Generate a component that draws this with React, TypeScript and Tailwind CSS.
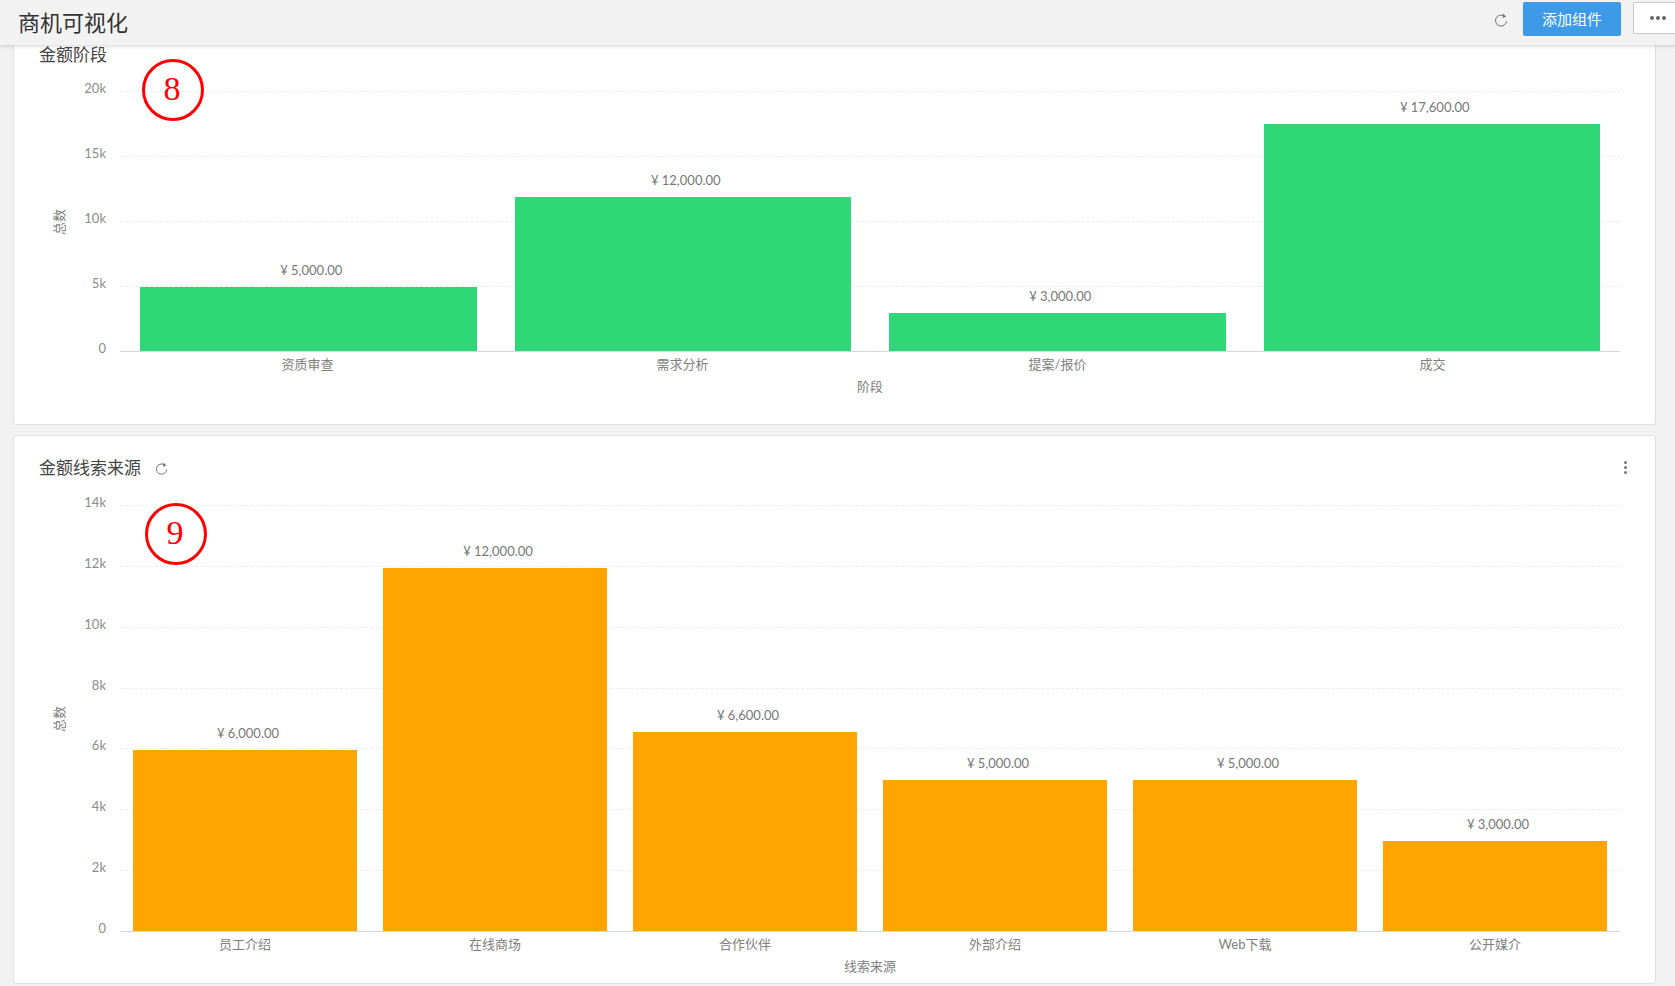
interface Datum {
  name: string;
  amount: string;
  height: number;
}

interface ChartProps {
  ticks: string[];
  plotHeight: number;
  barColor: string;
  rowClass: string;
  slotPadding: string;
  xTitle: string;
  data: Datum[];
}

const stageData: Datum[] = [
  { name: "资质审查", amount: "¥ 5,000.00", height: 64 },
  { name: "需求分析", amount: "¥ 12,000.00", height: 154 },
  { name: "提案/报价", amount: "¥ 3,000.00", height: 38 },
  { name: "成交", amount: "¥ 17,600.00", height: 227 },
];

const sourceData: Datum[] = [
  { name: "员工介绍", amount: "¥ 6,000.00", height: 181 },
  { name: "在线商场", amount: "¥ 12,000.00", height: 363 },
  { name: "合作伙伴", amount: "¥ 6,600.00", height: 199 },
  { name: "外部介绍", amount: "¥ 5,000.00", height: 151 },
  { name: "Web下载", amount: "¥ 5,000.00", height: 151 },
  { name: "公开媒介", amount: "¥ 3,000.00", height: 90 },
];

function RefreshIcon({ className }: { className: string }) {
  return (
    <svg viewBox="0 0 14 14" className={className} fill="none">
      <path d="M12.5 8A5.5 5.5 0 1 1 10 3" stroke="#707070" strokeWidth="1" />
      <path d="M9 .8 12.2 3.6 8.6 5Z" fill="#707070" />
    </svg>
  );
}

function Chart({ ticks, plotHeight, barColor, rowClass, slotPadding, xTitle, data }: ChartProps) {
  return (
    <div className="flex flex-col text-[13px] leading-4 text-[#808080]">
      <div className="flex">
        {/* y axis */}
        <div className="flex w-[106px] pl-[38px] pr-[14px]">
          <div className="flex w-[14px] items-center justify-center">
            <span className="whitespace-nowrap -rotate-90">总数</span>
          </div>
          <div className="-mt-[10px] -mb-[3px] flex flex-1 flex-col justify-between text-right leading-[14px] text-[#8c8c8c]">
            {ticks.map((t) => (
              <span key={t}>{t}</span>
            ))}
          </div>
        </div>

        {/* plot */}
        <div className="grid w-[1500px]" style={{ height: plotHeight }}>
          <div className="col-start-1 row-start-1 flex flex-col justify-between">
            {ticks.map((t, i) =>
              i === ticks.length - 1 ? (
                <div key={t} className="border-t border-[#d4d7dc]" />
              ) : (
                <div key={t} className="border-t border-dashed border-[#ececec]" />
              ),
            )}
          </div>
          <div className={`col-start-1 row-start-1 flex pb-px ${rowClass}`}>
            {data.map((d) => (
              <div key={d.name} className={`flex flex-1 flex-col items-stretch justify-end ${slotPadding}`}>
                <span className="mb-[10px] ml-[6px] text-center leading-[14px] text-[#777]">{d.amount}</span>
                <div style={{ height: d.height, backgroundColor: barColor }} />
              </div>
            ))}
          </div>
        </div>
      </div>

      {/* x axis */}
      <div className="mt-[4px] ml-[106px] flex w-[1500px]">
        {data.map((d) => (
          <span key={d.name} className="flex-1 text-center">
            {d.name}
          </span>
        ))}
      </div>
      <div className="mt-[6px] ml-[106px] w-[1500px] text-center">{xTitle}</div>
    </div>
  );
}

function Mark({ label, className }: { label: string; className: string }) {
  return (
    <div
      className={`absolute flex h-[62px] w-[62px] items-center justify-center rounded-full border-[3px] border-[#f00] pr-[2px] pb-[2px] text-[34px] leading-none text-[#f00] [font-family:'Liberation_Serif',serif] ${className}`}
    >
      {label}
    </div>
  );
}

export default function App() {
  return (
    <div className="flex h-screen w-full flex-col overflow-hidden bg-[#f2f2f2] [font-family:Lato,'Noto_Sans_CJK_SC',sans-serif]">
      {/* Top bar */}
      <header className="relative z-10 flex h-[45px] shrink-0 justify-between bg-[#f2f2f2] pl-[18px] shadow-[0_1px_4px_rgba(0,0,0,0.18)]">
        <h1 className="self-center text-[22px] leading-7 font-normal text-[#333]">商机可视化</h1>
        <div className="mt-[2px] flex items-start">
          <RefreshIcon className="mt-[11px] mr-[15px] h-[14px] w-[14px]" />
          <button className="h-[34px] w-[98px] rounded-[2px] bg-[#3c9ae8] text-[15px] text-white">添加组件</button>
          <button className="ml-[12px] flex h-[32px] w-[42px] items-center gap-[2px] rounded-l-[2px] border border-r-0 border-[#c8c8c8] bg-white pl-[16px]">
            <span className="h-[4px] w-[4px] rounded-full bg-[#666]" />
            <span className="h-[4px] w-[4px] rounded-full bg-[#666]" />
            <span className="h-[4px] w-[4px] rounded-full bg-[#666]" />
          </button>
        </div>
      </header>

      <main className="flex flex-col gap-[10px] pr-[19px] pl-[13px]">
        {/* Stage amount */}
        <section className="relative h-[380px] rounded-b-[3px] border-x border-b border-[#e0e0e0] bg-white">
          <h2 className="pl-[25px] text-[17px] leading-5 font-normal text-[#444]">金额阶段</h2>
          <div className="mt-[26px]">
            <Chart
              ticks={["20k", "15k", "10k", "5k", "0"]}
              plotHeight={261}
              barColor="#2fd776"
              rowClass="px-px"
              slotPadding="px-[19px]"
              xTitle="阶段"
              data={stageData}
            />
          </div>
          <Mark label="8" className="top-[14px] left-[128px]" />
        </section>

        {/* Lead source amount */}
        <section className="relative h-[549px] rounded-[3px] border border-[#e0e0e0] bg-white">
          <div className="flex items-center justify-between pt-[22px] pr-[28px] pl-[25px]">
            <div className="flex items-center gap-[14px]">
              <h2 className="text-[17px] leading-5 font-normal text-[#444]">金额线索来源</h2>
              <RefreshIcon className="h-[13px] w-[13px]" />
            </div>
            <div className="-mt-[2px] flex flex-col gap-[2px]">
              <span className="h-[3px] w-[3px] rounded-full bg-[#777]" />
              <span className="h-[3px] w-[3px] rounded-full bg-[#777]" />
              <span className="h-[3px] w-[3px] rounded-full bg-[#777]" />
            </div>
          </div>
          <div className="mt-[27px]">
            <Chart
              ticks={["14k", "12k", "10k", "8k", "6k", "4k", "2k", "0"]}
              plotHeight={427}
              barColor="#ffa400"
              rowClass=""
              slotPadding="px-[13px]"
              xTitle="线索来源"
              data={sourceData}
            />
          </div>
          <Mark label="9" className="top-[67px] left-[131px]" />
        </section>
      </main>
    </div>
  );
}
